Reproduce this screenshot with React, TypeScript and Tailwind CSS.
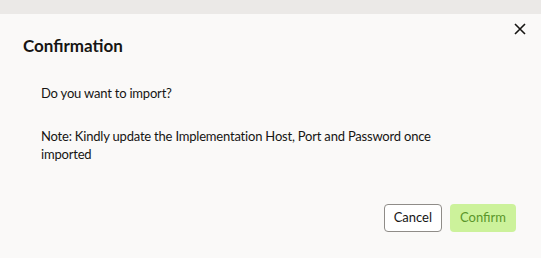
export default function App() {
    return <div className="w-[541px] h-[258px] flex flex-col bg-[#faf9f8] overflow-hidden" style={{ fontFamily: 'Lato, "Noto Sans", sans-serif' }}>
        <div className="h-[14px] bg-[#ebe9e7] shrink-0"></div>

        <div className="relative flex-1 flex flex-col">
            <button className="absolute right-[14px] top-[8px] w-[14px] h-[14px] flex items-center justify-center text-[#161513]">
                <svg width="12" height="12" viewBox="0 0 12 12" fill="none" stroke="currentColor" strokeWidth="1.6">
                    <path d="M1 1 L11 11 M11 1 L1 11" />
                </svg>
            </button>

            <h2 className="pl-[23px] pt-[21px] text-[17px] leading-[22px] font-bold text-[#161513]">Confirmation</h2>

            <div className="pl-[41px] pr-[60px] pt-[27px] text-[13px] leading-[18px] tracking-[-0.2px] text-[#161513]">
                <p>Do you want to import?</p>
                <p className="mt-[25px] max-w-[400px]">Note: Kindly update the Implementation Host, Port and Password once imported</p>
            </div>

            <div className="mt-auto mb-[26px] pr-[25px] flex justify-end gap-[8px]">
                <button className="h-[28px] px-[9px] rounded-[4px] border border-[#8f8c88] bg-white text-[13px] text-[#161513]">Cancel</button>
                <button className="h-[28px] px-[10px] rounded-[4px] bg-[#ccf29b] text-[13px] text-[#5a962a]">Confirm</button>
            </div>
        </div>
    </div>
}
